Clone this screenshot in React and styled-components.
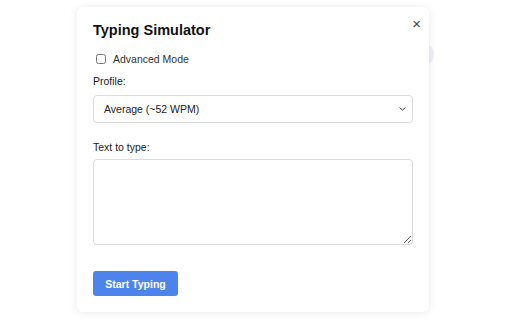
import React from "react";
import styled, { createGlobalStyle } from "styled-components";

const GlobalStyle = createGlobalStyle`
  * { box-sizing: border-box; }
  html, body {
    margin: 0;
    padding: 0;
    background: #ffffff;
    font-family: "Liberation Sans", Arial, sans-serif;
  }
`;

function App() {
  return (
    <>
      <GlobalStyle />
      <Page>
        {/* floating launcher peeking out behind the popup */}
        <Launcher />

        <Card>
          <CloseButton aria-label="Close">×</CloseButton>

          <Title>Typing Simulator</Title>

          <CheckRow>
            <Checkbox type="checkbox" />
            <span>Advanced Mode</span>
          </CheckRow>

          <Field $top={8} $gap={7}>
            <Label>Profile:</Label>
            <SelectWrap>
              <Select defaultValue="average">
                <option value="average">Average (~52 WPM)</option>
                <option value="slow">Slow (~30 WPM)</option>
                <option value="fast">Fast (~80 WPM)</option>
              </Select>
              <Chevron width="7" height="4" viewBox="0 0 7 4">
                <path d="M0.6 0.6 L3.5 3.2 L6.4 0.6" fill="none" stroke="#444" strokeWidth="1" />
              </Chevron>
            </SelectWrap>
          </Field>

          <Field $top={17} $gap={5}>
            <Label>Text to type:</Label>
            <TextArea />
          </Field>

          <PrimaryButton>Start Typing</PrimaryButton>
        </Card>
      </Page>
    </>
  );
}

export default App;

const Page = styled.div`
  position: relative;
  width: 512px;
  height: 320px;
  padding: 7px 0 0 77px;
  overflow: hidden;
`;

const Launcher = styled.div`
  position: absolute;
  left: 411px;
  top: 43px;
  width: 23px;
  height: 23px;
  border-radius: 50%;
  background: #eef0fb;
`;

const Card = styled.div`
  position: relative;
  width: 352px;
  height: 305px;
  background: #ffffff;
  border-radius: 6px;
  box-shadow: 0 1px 8px rgba(0, 0, 0, 0.09);
  padding: 14px 16px 16px 16px;
  display: flex;
  flex-direction: column;
`;

const CloseButton = styled.button`
  position: absolute;
  top: 9px;
  right: 8px;
  border: none;
  background: none;
  padding: 0;
  font-family: "Liberation Sans", Arial, sans-serif;
  font-size: 15px;
  line-height: 16px;
  color: #444;
  cursor: pointer;
`;

const Title = styled.h2`
  margin: 0;
  font-size: 14.5px;
  line-height: 18px;
  font-weight: 700;
  color: #111;
`;

const CheckRow = styled.label`
  display: flex;
  align-items: center;
  gap: 7px;
  margin-top: 13px;
  padding-left: 3px;
  height: 14px;
  font-size: 10.5px;
  color: #333;
`;

const Checkbox = styled.input`
  appearance: none;
  margin: 0;
  width: 10px;
  height: 10px;
  border: 1px solid #777;
  border-radius: 2.5px;
  background: #fff;
`;

const Field = styled.div`
  display: flex;
  flex-direction: column;
  gap: ${(p) => p.$gap}px;
  margin-top: ${(p) => p.$top}px;
`;

const Label = styled.div`
  font-size: 10.5px;
  line-height: 14px;
  color: #222;
`;

const SelectWrap = styled.div`
  position: relative;
`;

const Select = styled.select`
  appearance: none;
  width: 100%;
  height: 28px;
  padding: 0 10px;
  border: 1px solid #dcdcdc;
  border-radius: 4px;
  background: #fff;
  font-family: "Liberation Sans", Arial, sans-serif;
  font-size: 10.5px;
  color: #222;
  outline: none;
`;

const Chevron = styled.svg`
  position: absolute;
  right: 7px;
  top: 12px;
  pointer-events: none;
`;

const TextArea = styled.textarea`
  width: 100%;
  height: 86px;
  border: 1px solid #dcdcdc;
  border-radius: 4px;
  padding: 6px 8px;
  font-family: "Liberation Sans", Arial, sans-serif;
  font-size: 10.5px;
  resize: vertical;
  outline: none;
`;

const PrimaryButton = styled.button`
  align-self: flex-start;
  margin-top: 26px;
  width: 85px;
  height: 25px;
  border: none;
  border-radius: 3px;
  background: #4d84ec;
  color: #fff;
  font-family: "Liberation Sans", Arial, sans-serif;
  font-size: 10.5px;
  font-weight: 700;
  cursor: pointer;
`;
